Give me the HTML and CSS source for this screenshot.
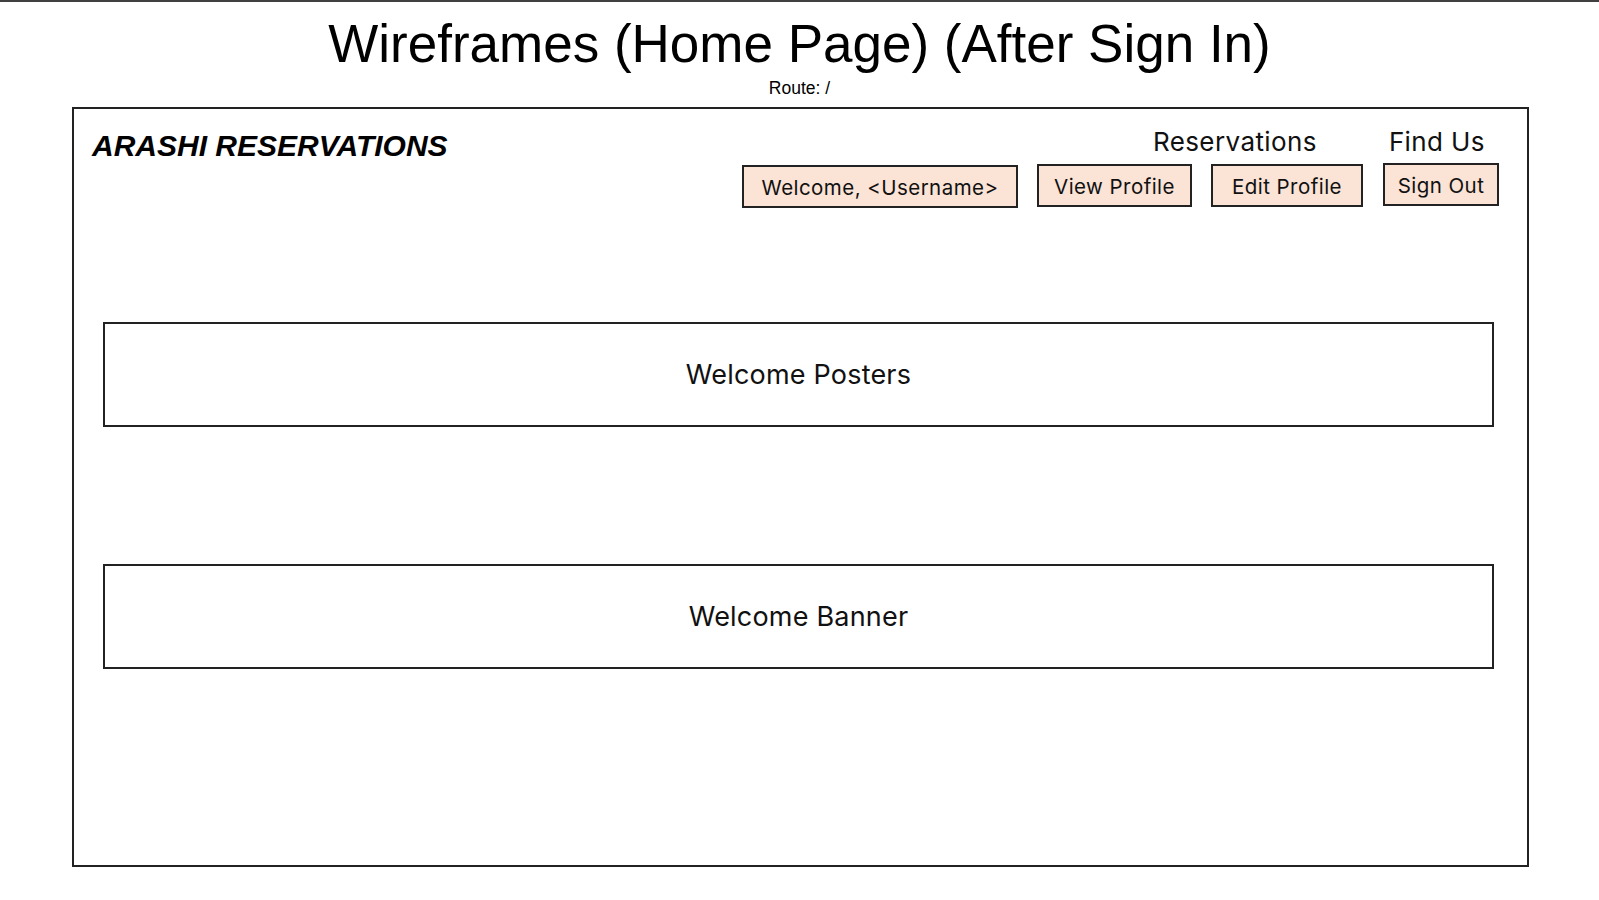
FILE: index.html
```html
<!DOCTYPE html>
<html lang="en">
<head>
<meta charset="utf-8">
<title>Wireframes (Home Page) (After Sign In)</title>
<link rel="stylesheet" href="styles.css">
</head>
<body>
  <h1 class="page-title">Wireframes (Home Page) (After Sign In)</h1>
  <p class="route">Route: /</p>
  <div class="frame">
    <header class="topbar">
      <div class="brand">ARASHI RESERVATIONS</div>
      <nav class="nav">
        <div class="nav-labels">
          <span class="nav-label">Reservations</span>
          <span class="nav-label">Find Us</span>
        </div>
        <div class="nav-buttons">
          <span class="btn btn-welcome">Welcome, &lt;Username&gt;</span>
          <span class="btn btn-view">View Profile</span>
          <span class="btn btn-edit">Edit Profile</span>
          <span class="btn btn-signout">Sign Out</span>
        </div>
      </nav>
    </header>
    <section class="panel panel-posters">Welcome Posters</section>
    <section class="panel panel-banner">Welcome Banner</section>
  </div>
</body>
</html>
```

FILE: styles.css
```css
html, body {
  margin: 0;
  padding: 0;
  background: #ffffff;
}

body {
  width: 1599px;
  height: 900px;
  box-sizing: border-box;
  border-top: 2px solid #404040;
  font-family: "Liberation Sans", Arial, sans-serif;
  color: #000000;
  overflow: hidden;
}

.page-title {
  margin: 15px 0 0;
  font-size: 53px;
  line-height: 53px;
  font-weight: 400;
  text-align: center;
}

.route {
  margin: 10px 0 0;
  font-size: 17.5px;
  line-height: 16px;
  text-align: center;
}

.frame {
  margin: 11px 0 0 72px;
  width: 1457px;
  height: 760px;
  box-sizing: border-box;
  border: 2px solid #222222;
}

.topbar {
  display: flex;
  justify-content: space-between;
  align-items: flex-start;
  padding: 0 28px 0 18px;
}

.brand {
  margin-top: 22px;
  font-size: 30px;
  line-height: 30px;
  font-weight: 700;
  font-style: italic;
}

.nav {
  display: flex;
  flex-direction: column;
  align-items: flex-end;
  font-family: Inter, "Liberation Sans", sans-serif;
}

.nav-labels {
  display: flex;
  gap: 72px;
  margin-top: 18px;
  margin-right: 14px;
}

.nav-label {
  font-size: 26px;
  line-height: 30px;
  letter-spacing: 0.4px;
  color: #111111;
}

.nav-buttons {
  display: flex;
  align-items: flex-start;
  gap: 19px;
  margin-top: 6px;
}

.btn {
  display: flex;
  align-items: center;
  justify-content: center;
  height: 43px;
  box-sizing: border-box;
  border: 2px solid #222222;
  background: #fbe3d6;
  font-size: 20.5px;
  line-height: 39px;
  letter-spacing: 0.45px;
  color: #111111;
  padding-top: 1px;
}

.btn-welcome { width: 276px; margin-top: 2px; }
.btn-view { width: 155px; margin-top: 1px; }
.btn-edit { width: 152px; margin-top: 1px; margin-right: 1px; }
.btn-signout { width: 116px; }

.panel {
  display: flex;
  align-items: center;
  justify-content: center;
  height: 105px;
  box-sizing: border-box;
  margin: 0 33px 0 29px;
  border: 2px solid #222222;
  font-family: Inter, "Liberation Sans", sans-serif;
  font-size: 27px;
  letter-spacing: 0.2px;
  color: #111111;
}

.panel-posters { margin-top: 114px; }
.panel-banner { margin-top: 137px; }
```
